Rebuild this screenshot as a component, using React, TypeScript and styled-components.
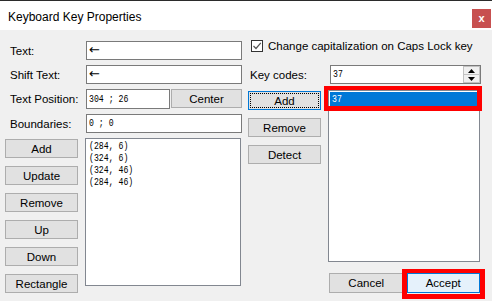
import styled, { createGlobalStyle } from 'styled-components';

const GlobalStyle = createGlobalStyle`
  html, body {
    margin: 0;
    padding: 0;
    background: #f0f0f0;
  }
  * {
    box-sizing: border-box;
  }
`;

const points = ['(284, 6)', '(324, 6)', '(324, 46)', '(284, 46)'];
const shapeButtons = ['Add', 'Update', 'Remove', 'Up', 'Down', 'Rectangle'];

export default function App() {
  return (
    <>
      <GlobalStyle />
      <Window>
        <TitleBar>
          <Title>Keyboard Key Properties</Title>
          <CloseButton>x</CloseButton>
        </TitleBar>

        <Body>
          <LeftColumn>
            <FieldRow>
              <Label>Text:</Label>
              <TextBox $width={156}>
                <Arrow>←</Arrow>
              </TextBox>
            </FieldRow>
            <FieldRow>
              <Label>Shift Text:</Label>
              <TextBox $width={156}>
                <Arrow>←</Arrow>
              </TextBox>
            </FieldRow>
            <FieldRow $height={20}>
              <Label>Text Position:</Label>
              <TextBox $width={84}>
                <Mono>304 ; 26</Mono>
              </TextBox>
              <Button $width={71}>Center</Button>
            </FieldRow>
            <FieldRow>
              <Label>Boundaries:</Label>
              <TextBox $width={156}>
                <Mono>0 ; 0</Mono>
              </TextBox>
            </FieldRow>

            <EditorRow>
              <ButtonStack>
                {shapeButtons.map((b) => (
                  <Button key={b}>{b}</Button>
                ))}
              </ButtonStack>
              <ListBox $width={156} $height={148}>
                {points.map((p, i) => (
                  <PointItem key={i}>
                    <Mono>{p}</Mono>
                  </PointItem>
                ))}
              </ListBox>
            </EditorRow>
          </LeftColumn>

          <RightColumn>
            <CheckRow>
              <CheckBox>
                <svg width="10" height="10" viewBox="0 0 10 10">
                  <polyline
                    points="1.5,5 4,7.5 8.8,1.8"
                    fill="none"
                    stroke="#555"
                    strokeWidth="1.2"
                  />
                </svg>
              </CheckBox>
              <CheckLabel>Change capitalization on Caps Lock key</CheckLabel>
            </CheckRow>

            <FieldRow $labelWidth={81} $indent={2}>
              <Label>Key codes:</Label>
              <TextBox $width={151}>
                <Mono>37</Mono>
                <Spinner>
                  <SpinHalf>
                    <svg width="7" height="4" viewBox="0 0 7 4">
                      <polygon points="0,4 3.5,0 7,4" fill="#000" />
                    </svg>
                  </SpinHalf>
                  <SpinHalf $bottom>
                    <svg width="7" height="4" viewBox="0 0 7 4">
                      <polygon points="0,0 7,0 3.5,4" fill="#000" />
                    </svg>
                  </SpinHalf>
                </Spinner>
              </TextBox>
            </FieldRow>

            <EditorRow $top={6}>
              <ButtonStack>
                <Button $focused>Add</Button>
                <Button>Remove</Button>
                <Button>Detect</Button>
              </ButtonStack>
              <ListBox $width={152} $height={172}>
                <SelectedItem>
                  <Mono>37</Mono>
                  <Highlight />
                </SelectedItem>
              </ListBox>
            </EditorRow>

            <Footer>
              <Button $width={75} $height={20}>
                Cancel
              </Button>
              <Button $width={74} $height={20} $primary>
                Accept
                <AcceptHighlight />
              </Button>
            </Footer>
          </RightColumn>
        </Body>
      </Window>
    </>
  );
}

const Window = styled.div`
  width: 492px;
  height: 301px;
  background: #f0f0f0;
  display: flex;
  flex-direction: column;
  overflow: hidden;
  font-family: 'Liberation Sans', Arial, sans-serif;
  font-size: 11.5px;
  color: #000;
`;

const TitleBar = styled.div`
  height: 30px;
  background: #fff;
  border-top: 1px solid #2b2b2b;
  display: flex;
  align-items: center;
  justify-content: space-between;
  padding-left: 8px;
`;

const Title = styled.span`
  font-size: 12px;
  color: #000;
  margin-top: 2px;
`;

const CloseButton = styled.div`
  width: 19px;
  height: 19px;
  margin-right: 1px;
  margin-top: 6px;
  background: #c75050;
  color: #fff;
  font-weight: bold;
  font-size: 11px;
  display: flex;
  align-items: center;
  justify-content: center;
  padding-bottom: 2px;
`;

const Body = styled.div`
  display: flex;
  gap: 7px;
  padding: 11px 0 0 5px;
`;

const LeftColumn = styled.div`
  width: 236px;
  display: flex;
  flex-direction: column;
  gap: 5px;
`;

const RightColumn = styled.div`
  width: 232px;
  display: flex;
  flex-direction: column;
`;

const FieldRow = styled.div<{ $height?: number; $labelWidth?: number; $indent?: number }>`
  display: grid;
  grid-template-columns: ${(p) => p.$labelWidth ?? 80}px auto auto;
  justify-content: start;
  align-items: stretch;
  column-gap: 1px;
  height: ${(p) => p.$height ?? 19}px;

  & > span:first-child {
    padding-left: ${(p) => p.$indent ?? 5}px;
  }

  ${RightColumn} & {
    margin-top: 5px;
  }
`;

const Label = styled.span`
  display: flex;
  align-items: center;
  white-space: nowrap;
`;

const TextBox = styled.div<{ $width: number }>`
  width: ${(p) => p.$width}px;
  background: #fff;
  border: 1px solid #7a7a7a;
  display: flex;
  align-items: center;
  justify-content: space-between;
  padding-left: 2px;
  overflow: hidden;
`;

const Arrow = styled.span`
  font-family: 'DejaVu Sans', sans-serif;
  font-size: 13px;
  line-height: 1;
  margin-top: -2px;
`;

/* narrow fixed-pitch look of the original dialog's number font */
const Mono = styled.span`
  display: inline-block;
  font-family: 'Liberation Mono', 'Courier New', monospace;
  font-size: 10.5px;
  line-height: 11px;
  white-space: pre;
  transform: scale(0.78, 1.1);
  transform-origin: left center;
`;

const Button = styled.div<{
  $width?: number;
  $height?: number;
  $focused?: boolean;
  $primary?: boolean;
}>`
  position: relative;
  width: ${(p) => p.$width ?? 73}px;
  height: ${(p) => p.$height ?? 19}px;
  background: ${(p) => (p.$primary ? '#e5f1fb' : '#e1e1e1')};
  border: 1px solid ${(p) => (p.$focused || p.$primary ? '#0078d7' : '#adadad')};
  outline: ${(p) => (p.$focused ? '1px dotted #000' : 'none')};
  outline-offset: -3px;
  display: flex;
  align-items: center;
  justify-content: center;
  white-space: nowrap;
`;

const EditorRow = styled.div<{ $top?: number }>`
  display: flex;
  align-items: flex-start;
  gap: 7px;
  margin-top: ${(p) => p.$top ?? 0}px;
`;

const ButtonStack = styled.div`
  display: flex;
  flex-direction: column;
  gap: 8px;
  margin-top: 1px;
`;

const ListBox = styled.div<{ $width: number; $height: number }>`
  width: ${(p) => p.$width}px;
  height: ${(p) => p.$height}px;
  background: #fff;
  border: 1px solid #828790;
  padding: 1px 1px;
  display: flex;
  flex-direction: column;
`;

const PointItem = styled.div`
  height: 12px;
  display: flex;
  align-items: center;
  padding-left: 2px;
`;

const SelectedItem = styled.div`
  position: relative;
  height: 14px;
  margin-right: 1px;
  background: #0078d7;
  color: #fff;
  display: flex;
  align-items: center;
  padding-left: 2px;
`;

const Highlight = styled.div`
  position: absolute;
  left: -6px;
  top: -6px;
  right: -5px;
  bottom: -5px;
  border: 5px solid #ff0000;
  border-top-width: 4px;
  border-left-width: 4px;
`;

const AcceptHighlight = styled.div`
  position: absolute;
  left: -6px;
  top: -5px;
  right: -6px;
  bottom: -7px;
  border: 5px solid #ff0000;
  border-top-width: 4px;
`;

const CheckRow = styled.div`
  height: 19px;
  display: flex;
  align-items: flex-start;
  gap: 5px;
  padding-left: 3px;
`;

const CheckBox = styled.div`
  width: 12px;
  height: 12px;
  margin-top: -1px;
  border: 1px solid #333;
  background: #fff;
  display: flex;
  align-items: center;
  justify-content: center;
`;

const CheckLabel = styled.span`
  margin-top: -1px;
  white-space: nowrap;
`;

const Spinner = styled.div`
  width: 17px;
  height: 17px;
  flex-shrink: 0;
  display: flex;
  flex-direction: column;
  border: 1px solid #c2c2c2;
  background: #f0f0f0;
`;

const SpinHalf = styled.div<{ $bottom?: boolean }>`
  flex: 1;
  display: flex;
  align-items: center;
  justify-content: center;
  border-top: ${(p) => (p.$bottom ? '1px solid #c2c2c2' : 'none')};
`;

const Footer = styled.div`
  display: flex;
  gap: 3px;
  margin-top: 11px;
  padding-left: 81px;
`;
